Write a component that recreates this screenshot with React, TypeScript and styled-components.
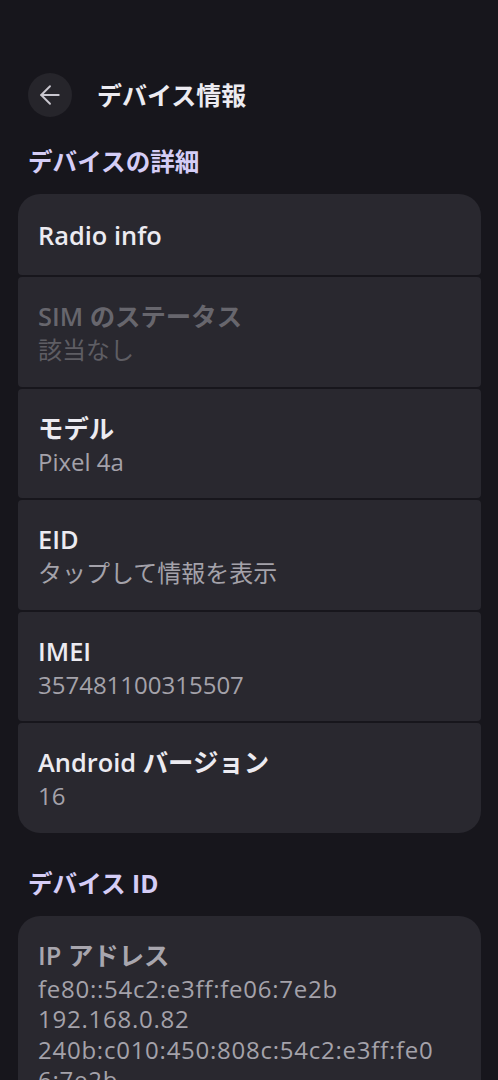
import React from 'react';
import styled, { createGlobalStyle } from 'styled-components';
import { ArrowLeft } from 'lucide-react';

const GlobalStyle = createGlobalStyle`
  html, body {
    margin: 0;
    padding: 0;
    background: #17161c;
  }
  body {
    font-family: "Open Sans", "Noto Sans CJK JP", sans-serif;
    -webkit-font-smoothing: antialiased;
  }
`;

const Page = styled.div`
  min-height: 1080px;
  padding: 73px 17px 0 18px;
  box-sizing: border-box;
  overflow: hidden;
`;

const Header = styled.header`
  display: flex;
  align-items: center;
  gap: 25px;
  padding-left: 10px;
  margin-bottom: 29px;
`;

const BackButton = styled.button`
  width: 44px;
  height: 44px;
  border-radius: 50%;
  border: none;
  background: #26252b;
  color: #c9c7cf;
  display: flex;
  align-items: center;
  justify-content: center;
  padding: 0;
`;

const Title = styled.h1`
  margin: 0;
  font-size: 25px;
  font-weight: 700;
  color: #ecebf1;
  line-height: 34px;
`;

const SectionTitle = styled.h2<{ $spaced?: boolean }>`
  margin: ${p => (p.$spaced ? '35px' : '0')} 0 16px 10px;
  font-size: 24.6px;
  font-weight: 700;
  line-height: 32px;
  color: #d5cdf6;
`;

const Group = styled.div`
  display: flex;
  flex-direction: column;
  gap: 2px;
  border-radius: 22px;
  overflow: hidden;
`;

const Item = styled.div<{ $single?: boolean }>`
  background: #29282f;
  border-radius: 4px;
  padding: ${p => (p.$single ? '3px 28px 0 20px' : '22px 28px 21px 20px')};
  min-height: ${p => (p.$single ? '81px' : 'auto')};
  box-sizing: border-box;
  display: flex;
  flex-direction: column;
  justify-content: center;
`;

const ItemTitle = styled.div<{ $tone: 'normal' | 'disabled' | 'muted' }>`
  font-size: 25.4px;
  font-weight: 600;
  line-height: 34px;
  margin-bottom: 2px;
  color: ${p =>
    p.$tone === 'disabled' ? '#67666d' : p.$tone === 'muted' ? '#a8a6ae' : '#ecebf1'};
`;

const ItemValue = styled.div<{ $disabled?: boolean; $address?: boolean }>`
  font-size: 24px;
  line-height: 30.5px;
  letter-spacing: ${p => (p.$address ? '0.75px' : '0')};
  color: ${p => (p.$disabled ? '#5e5d63' : '#a4a2aa')};
  word-break: break-all;
`;

type Row = { title: string; value?: string; disabled?: boolean };

const details: Row[] = [
  { title: 'Radio info' },
  { title: 'SIM のステータス', value: '該当なし', disabled: true },
  { title: 'モデル', value: 'Pixel 4a' },
  { title: 'EID', value: 'タップして情報を表示' },
  { title: 'IMEI', value: '357481100315507' },
  { title: 'Android バージョン', value: '16' },
];

const ipLines = [
  'fe80::54c2:e3ff:fe06:7e2b',
  '192.168.0.82',
  '240b:c010:450:808c:54c2:e3ff:fe06:7e2b',
];

const App: React.FC = () => (
  <>
    <GlobalStyle />
    <Page>
      <Header>
        <BackButton aria-label="戻る">
          <ArrowLeft size={30} strokeWidth={1.5} />
        </BackButton>
        <Title>デバイス情報</Title>
      </Header>

      <SectionTitle>デバイスの詳細</SectionTitle>
      <Group>
        {details.map(row => (
          <Item key={row.title} $single={!row.value}>
            <ItemTitle $tone={row.disabled ? 'disabled' : 'normal'}>{row.title}</ItemTitle>
            {row.value && <ItemValue $disabled={row.disabled}>{row.value}</ItemValue>}
          </Item>
        ))}
      </Group>

      <SectionTitle $spaced>デバイス ID</SectionTitle>
      <Group>
        <Item>
          <ItemTitle $tone="muted">IP アドレス</ItemTitle>
          {ipLines.map(line => (
            <ItemValue key={line} $address>
              {line}
            </ItemValue>
          ))}
        </Item>
      </Group>
    </Page>
  </>
);

export default App;
